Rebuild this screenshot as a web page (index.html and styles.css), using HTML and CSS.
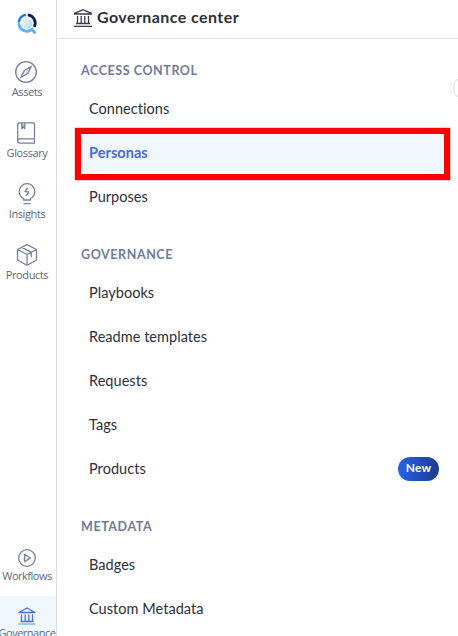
FILE: index.html
```html
<!DOCTYPE html>
<html lang="en">
<head>
<meta charset="utf-8">
<title>Governance center</title>
<link rel="stylesheet" href="styles.css">
</head>
<body>
<div class="app">
  <nav class="rail">
    <svg class="logo" viewBox="0 0 22 22" fill="none">
      <defs><linearGradient id="core" x1="0" y1="0" x2="1" y2="1"><stop offset="0" stop-color="#fff"/><stop offset="1" stop-color="#a6d2ff"/></linearGradient></defs>
      <circle cx="10" cy="10" r="5.6" fill="url(#core)"/>
      <path d="M1.8 9.5A8.3 8.3 0 0 1 9 1.8" stroke="#1677f2" stroke-width="2.6"/>
      <path d="M10.8 1.8a8.3 8.3 0 0 1 6.5 12" stroke="#06204f" stroke-width="2.8"/>
      <path d="M1.9 11.3c1.2 6.3 8.2 8.9 13.2 5.2l2.6 3" stroke="#62b0fa" stroke-width="2.9" stroke-linecap="round"/>
    </svg>
    <a class="rail-item assets">
      <svg class="icon" viewBox="0 0 22 22"><circle cx="11" cy="11" r="10.3"/><path class="tint" d="M16.3 5.5 12.7 12.5 5.7 16.5 9.3 9.5Z"/></svg>
      <span>Assets</span>
    </a>
    <a class="rail-item">
      <svg class="icon" viewBox="0 0 22 22"><path d="M4 .8H17.2Q18.5.8 18.5 2V21.2H4Q1.7 21.2 1.7 18.8V3Q1.7.8 4 .8ZM1.7 18.8Q1.7 16.8 4 16.8H18.5"/><path class="ribbon" d="M5.8 1v5.5L7.3 5l1.5 1.5V1"/></svg>
      <span>Glossary</span>
    </a>
    <a class="rail-item">
      <svg class="icon" viewBox="0 0 22 22"><path d="M7.5 17V15.5C4.8 14 3.2 11.5 3.2 8.5a7.8 7.8 0 0 1 15.6 0C18.8 11.5 17.2 14 14.5 15.5V17ZM7.5 20.7h7M11.8 4.8 9 8.3l3.8.9L10 12.7"/></svg>
      <span>Insights</span>
    </a>
    <a class="rail-item">
      <svg class="icon" viewBox="0 0 22 22"><path d="M11 .7 20.5 5.5V16L11 21.3 1.5 16V5.5ZM1.5 5.5 11 10.5 20.5 5.5M11 10.5V21M5.7 3.3 15.3 8.2V13"/></svg>
      <span>Products</span>
    </a>
    <a class="rail-item workflows">
      <svg class="icon small" viewBox="0 0 18 18"><circle cx="9" cy="9" r="8.3"/><path class="tint" d="M6.5 5.3 12.5 9 6.5 12.7Z"/></svg>
      <span>Workflows</span>
    </a>
    <a class="rail-item current">
      <svg class="icon small" viewBox="0 0 18 18"><path d="M1 5.5 9 1l8 4.5ZM3.5 7.5v6.5M7.2 7.5v6.5M10.8 7.5v6.5M14.5 7.5v6.5M2.5 14.5h13"/><path class="base" d="M.5 17h17"/></svg>
      <span>Governance</span>
    </a>
  </nav>
  <main class="panel">
    <header class="title">
      <svg class="bank" viewBox="0 0 18 18"><path d="M.7 5V4.3L9 .7l8.3 3.6V5ZM3.5 7v7M7.2 7v7M10.8 7v7M14.5 7v7M2 14.5h14M0 17.3h18"/></svg>
      <h1>Governance center</h1>
    </header>
    <section class="group">
      <h2>ACCESS CONTROL</h2>
      <a class="item"><span>Connections</span></a>
      <a class="item active"><span>Personas</span></a>
      <a class="item"><span>Purposes</span></a>
    </section>
    <section class="group">
      <h2>GOVERNANCE</h2>
      <a class="item"><span>Playbooks</span></a>
      <a class="item"><span>Readme templates</span></a>
      <a class="item"><span>Requests</span></a>
      <a class="item"><span>Tags</span></a>
      <a class="item"><span>Products</span><b class="pill">New</b></a>
    </section>
    <section class="group">
      <h2>METADATA</h2>
      <a class="item"><span>Badges</span></a>
      <a class="item"><span>Custom Metadata</span></a>
    </section>
    <div class="collapse"></div>
  </main>
</div>
</body>
</html>
```
FILE: styles.css
```css
* { box-sizing: border-box; }
body { margin: 0; background: #fff; color: #2b2f3c; font-family: Lato, "Liberation Sans", sans-serif; }
.app { display: flex; height: 636px; overflow: hidden; }
.rail { flex: none; width: 57px; border-right: 1px solid #dadde8; display: flex; flex-direction: column; }
.logo { flex: none; width: 22px; height: 22px; margin: 13px 0 22px 17px; }
.rail-item { flex: none; height: 61px; padding-top: 4px; display: flex; flex-direction: column; align-items: center; color: #5f6a84; font: 11px/16px "Open Sans", sans-serif; letter-spacing: -.4px; white-space: nowrap; }
.icon { flex: none; width: 22px; height: 22px; margin-bottom: 1px; margin-right: 2px; fill: none; stroke: #74809c; stroke-width: 1.3; stroke-linejoin: round; }
.assets .icon { margin-right: 4px; }
.rail-item span { margin-right: 2px; }
.tint { fill: #e1e4ed; }
.ribbon { fill: #b9c0d0; }
.small { width: 18px; height: 18px; }
.workflows { margin-top: auto; height: 51px; letter-spacing: -.5px; }
.current { height: 40px; padding-top: 11px; background: #f0f7ff; letter-spacing: -.5px; }
.current .icon { stroke: #4770dc; margin-bottom: 0; }
.current .base { stroke: #5bbcf0; }
.panel { flex: 1; min-width: 0; position: relative; }
.title { height: 39px; border-bottom: 1px solid #dfe3ec; display: flex; align-items: center; padding: 0 0 3px 17px; gap: 5px; }
.bank { width: 18px; height: 18px; fill: none; stroke: #3b3c50; stroke-width: 1.3; }
h1 { margin: 0 0 2px; font-size: 16px; line-height: 22px; font-weight: 700; letter-spacing: .43px; }
.group { padding: 21px 14px 0 24px; display: flex; flex-direction: column; gap: 8px; }
.group + .group { padding-top: 28px; }
h2 { margin: 0 0 -1px; height: 24px; line-height: 21px; font-size: 12.5px; font-weight: 700; letter-spacing: .58px; color: #6f7b98; }
.group + .group h2 { height: 25px; line-height: 24px; }
.item { height: 36px; padding: 0 5px 0 8px; display: flex; align-items: center; justify-content: space-between; font-size: 14.5px; line-height: 18px; letter-spacing: .04px; }
.active { position: relative; color: #4a6bdc; font-weight: 700; background: #f0f7ff; }
.active::after { content: ""; box-sizing: border-box; position: absolute; left: -6px; right: -6px; top: -7px; height: 52px; border: 6px solid red; box-shadow: 0 0 0 .5px #ff9a9a; }
.pill { width: 41px; height: 24px; border-radius: 12px; background: linear-gradient(90deg, #2563eb, #1e3a8a); color: #fff; font-size: 12px; line-height: 22px; letter-spacing: .2px; text-align: center; }
.collapse { position: absolute; left: 396px; top: 76px; width: 24px; height: 24px; border: 1px solid #dadde8; border-radius: 50%; }
```
